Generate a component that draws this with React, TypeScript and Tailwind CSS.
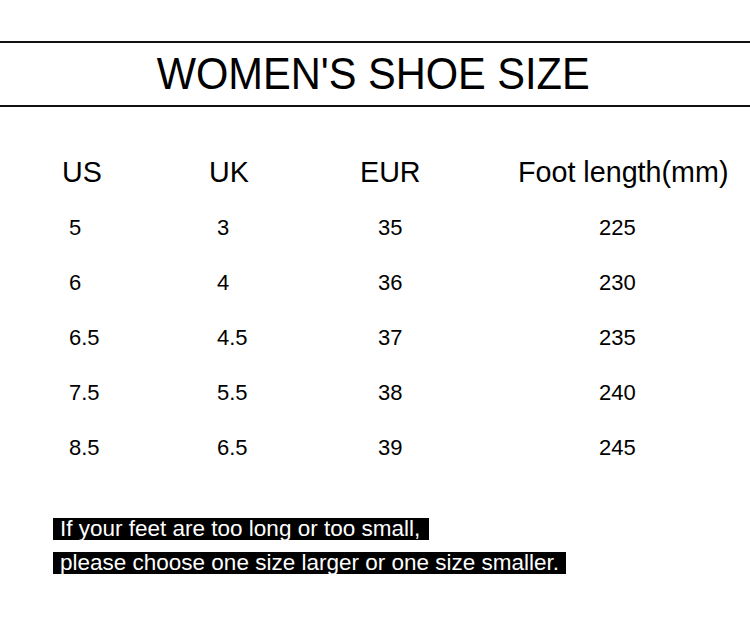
export default function App() {
  const rows = [
    ["5", "3", "35", "225"],
    ["6", "4", "36", "230"],
    ["6.5", "4.5", "37", "235"],
    ["7.5", "5.5", "38", "240"],
    ["8.5", "6.5", "39", "245"],
  ];
  const cols = [
    { head: "US", w: "w-[147px]", dataPad: "pl-[7px]" },
    { head: "UK", w: "w-[151px]", dataPad: "pl-[8px]" },
    { head: "EUR", w: "w-[158px]", dataPad: "pl-[18px]" },
    { head: "Foot length(mm)", w: "w-[232px]", dataPad: "pl-[81px]" },
  ];
  return (
    <div
      className="w-[750px] h-[617px] bg-white text-black overflow-hidden"
      style={{ fontFamily: '"Liberation Sans", Arial, sans-serif' }}
    >
      <div className="h-[41px]" />
      <div className="border-y-2 border-[#111] h-[66px] flex justify-center">
        <div className="text-[44px] leading-[62px] scale-x-[0.945] pr-[4px]">
          WOMEN'S SHOE SIZE
        </div>
      </div>
      <div className="mt-[51px] pl-[62px] flex">
        {cols.map((c, ci) => (
          <div key={ci} className={`${c.w} flex flex-col`}>
            <div className="text-[28.7px] leading-[28px] h-[28px] whitespace-nowrap">{c.head}</div>
            <div className="mt-[14px] flex flex-col">
              {rows.map((r, ri) => (
                <div key={ri} className={`text-[22px] leading-[55px] h-[55px] ${c.dataPad}`}>
                  {r[ci]}
                </div>
              ))}
            </div>
          </div>
        ))}
      </div>
      <div className="mt-[43px] pl-[53px] flex flex-col items-start gap-[12px]">
        <div className="bg-black text-white text-[22.5px] leading-[22px] h-[22px] pl-[7px] pr-[9px] whitespace-nowrap">
          If your feet are too long or too small,
        </div>
        <div className="bg-black text-white text-[22.5px] leading-[22px] h-[22px] pl-[7px] pr-[7px] whitespace-nowrap">
          please choose one size larger or one size smaller.
        </div>
      </div>
    </div>
  );
}
